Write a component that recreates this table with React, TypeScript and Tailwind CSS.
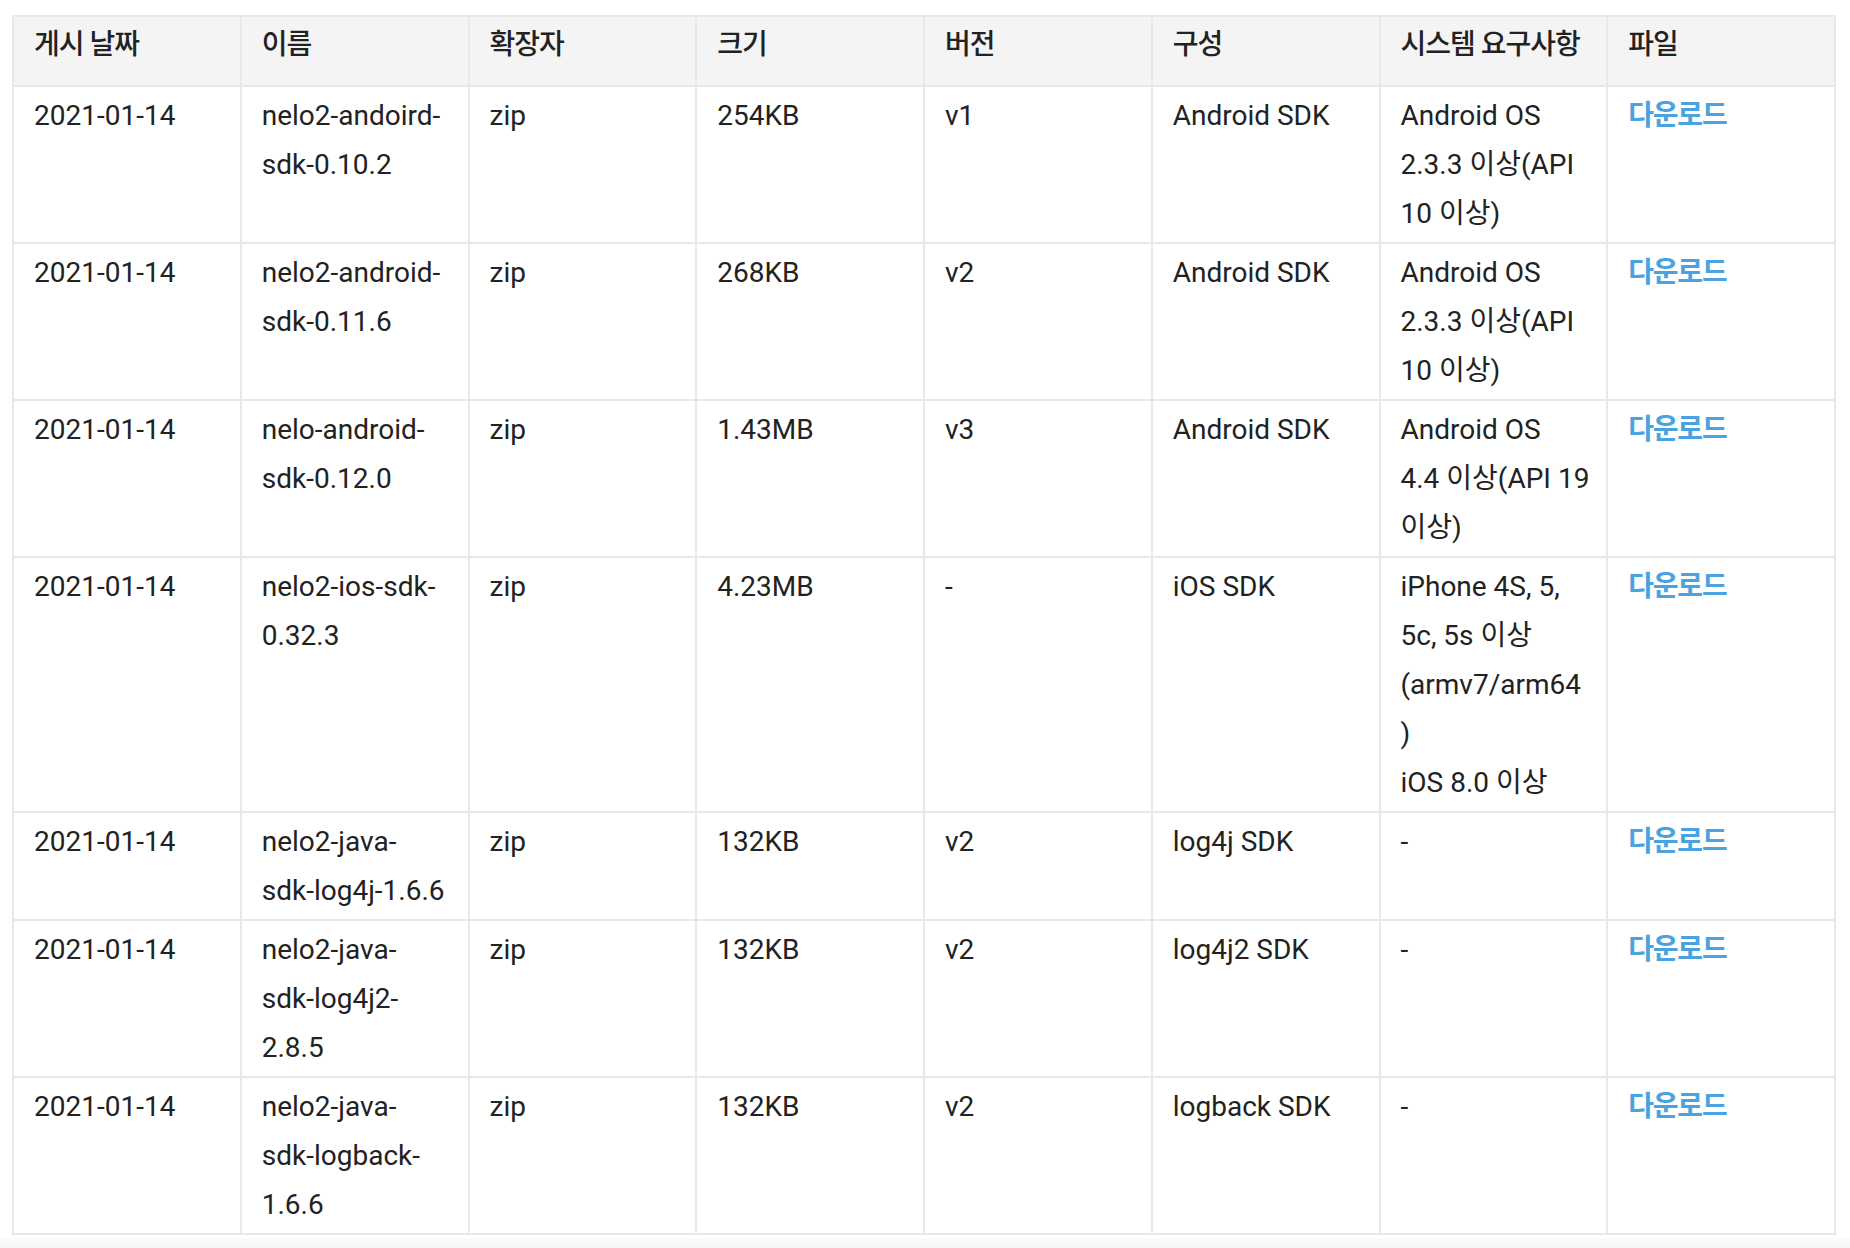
import React from "react";

type Row = {
  date: string;
  name: string[];
  ext: string;
  size: string;
  ver: string;
  comp: string;
  req: string[];
};

const rows: Row[] = [
  {
    date: "2021-01-14",
    name: ["nelo2-andoird-", "sdk-0.10.2"],
    ext: "zip",
    size: "254KB",
    ver: "v1",
    comp: "Android SDK",
    req: ["Android OS", "2.3.3 이상(API", "10 이상)"],
  },
  {
    date: "2021-01-14",
    name: ["nelo2-android-", "sdk-0.11.6"],
    ext: "zip",
    size: "268KB",
    ver: "v2",
    comp: "Android SDK",
    req: ["Android OS", "2.3.3 이상(API", "10 이상)"],
  },
  {
    date: "2021-01-14",
    name: ["nelo-android-", "sdk-0.12.0"],
    ext: "zip",
    size: "1.43MB",
    ver: "v3",
    comp: "Android SDK",
    req: ["Android OS", "4.4 이상(API 19", "이상)"],
  },
  {
    date: "2021-01-14",
    name: ["nelo2-ios-sdk-", "0.32.3"],
    ext: "zip",
    size: "4.23MB",
    ver: "-",
    comp: "iOS SDK",
    req: ["iPhone 4S, 5,", "5c, 5s 이상", "(armv7/arm64", ")", "iOS 8.0 이상"],
  },
  {
    date: "2021-01-14",
    name: ["nelo2-java-", "sdk-log4j-1.6.6"],
    ext: "zip",
    size: "132KB",
    ver: "v2",
    comp: "log4j SDK",
    req: ["-"],
  },
  {
    date: "2021-01-14",
    name: ["nelo2-java-", "sdk-log4j2-", "2.8.5"],
    ext: "zip",
    size: "132KB",
    ver: "v2",
    comp: "log4j2 SDK",
    req: ["-"],
  },
  {
    date: "2021-01-14",
    name: ["nelo2-java-", "sdk-logback-", "1.6.6"],
    ext: "zip",
    size: "132KB",
    ver: "v2",
    comp: "logback SDK",
    req: ["-"],
  },
];

const headers = ["게시 날짜", "이름", "확장자", "크기", "버전", "구성", "시스템 요구사항", "파일"];

function Lines({ lines }: { lines: string[] }) {
  return (
    <>
      {lines.map((l, i) => (
        <div key={i} className="whitespace-nowrap">
          {l}
        </div>
      ))}
    </>
  );
}

const td = "border-2 border-[#e8e8e8] px-5 pt-[4px] pb-[4px] align-top text-left";

export default function App() {
  return (
    <div className="min-h-[1248px] bg-white font-['Roboto','Noto_Sans_CJK_KR',sans-serif] text-[28px] leading-[49px] text-[#222222]">
      <div className="pl-[12px] pr-[14px] pt-[15px]">
        <table className="w-[1824px] table-fixed border-collapse">
          <thead>
            <tr className="bg-[#f4f4f4]">
              {headers.map((h) => (
                <th
                  key={h}
                  className="h-[70px] border-2 border-[#e8e8e8] px-5 pt-[3px] pb-[14px] align-top text-left font-medium tracking-[-1px] whitespace-nowrap"
                >
                  {h}
                </th>
              ))}
            </tr>
          </thead>
          <tbody>
            {rows.map((r, i) => (
              <tr key={i}>
                <td className={td}>{r.date}</td>
                <td className={td}>
                  <Lines lines={r.name} />
                </td>
                <td className={td}>{r.ext}</td>
                <td className={td}>{r.size}</td>
                <td className={td}>{r.ver}</td>
                <td className={td}>{r.comp}</td>
                <td className={td}>
                  <Lines lines={r.req} />
                </td>
                <td className={td}>
                  <a href="#" className="font-semibold tracking-[-1.2px] text-[#4aa3e0]">
                    다운로드
                  </a>
                </td>
              </tr>
            ))}
          </tbody>
        </table>
      </div>
      <div className="mt-[3px] h-[14px] bg-gradient-to-b from-[#fbfbfb] to-[#f6f6f6]" />
    </div>
  );
}
